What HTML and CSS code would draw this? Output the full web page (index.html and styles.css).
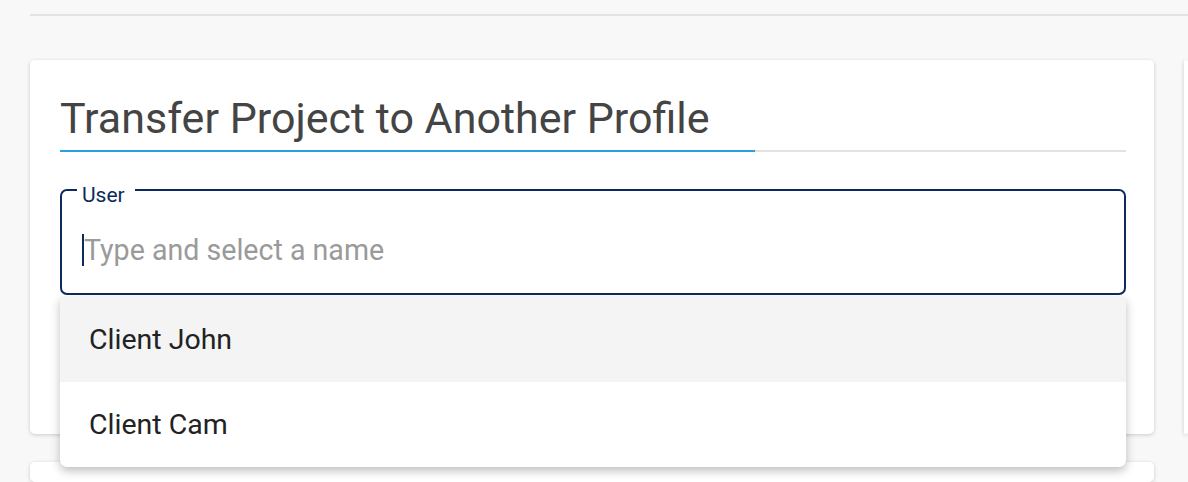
FILE: index.html
```html
<!DOCTYPE html>
<html lang="en">
<head>
    <meta charset="UTF-8">
    <meta name="viewport" content="width=device-width, initial-scale=1.0">
    <title>Transfer Project</title>
    <link rel="stylesheet" href="styles.css">
</head>
<body>
    <div class="topbar"></div>

    <div class="layout">
        <div class="column">
            <!-- Transfer card -->
            <section class="card transfer-card">
                <h2 class="card-title">Transfer Project to Another Profile</h2>
                <div class="tabline"><span class="tabline-active"></span></div>

                <div class="field">
                    <div class="field-box">
                        <label class="field-label" for="userInput">User</label>
                        <span class="caret"></span>
                        <input type="text" id="userInput" placeholder="Type and select a name">
                    </div>

                    <ul class="options">
                        <li class="option active">Client John</li>
                        <li class="option">Client Cam</li>
                    </ul>
                </div>
            </section>

            <section class="card next-card"></section>
        </div>

        <aside class="card side-card"></aside>
    </div>
</body>
</html>
```

FILE: styles.css
```css
/* General Styles */
body {
    font-family: 'Roboto', 'Liberation Sans', sans-serif;
    margin: 0;
    padding: 0;
    background: #f8f8f8;
    color: #212121;
    overflow: hidden;
}

.topbar {
    height: 14px;
    margin-left: 30px;
    border-bottom: 2px solid #e4e4e4;
}

/* Layout */
.layout {
    display: flex;
    gap: 30px;
    padding: 44px 0 0 30px;
}

.column {
    width: 1124px;
    flex-shrink: 0;
    display: flex;
    flex-direction: column;
    gap: 28px;
}

/* Card Styles */
.card {
    background: #fff;
    border-radius: 5px;
    box-shadow: 0 1px 4px rgba(0, 0, 0, 0.18);
}

.transfer-card {
    height: 374px;
    padding: 28px 28px 0 30px;
    box-sizing: border-box;
}

.next-card {
    height: 20px;
}

.side-card {
    width: 200px;
    height: 374px;
}

.card-title {
    margin: 0;
    font-size: 43px;
    font-weight: 400;
    color: #444;
    line-height: 60px;
}

.tabline {
    height: 2px;
    background: #e2e2e2;
    margin-top: 2px;
}

.tabline-active {
    display: block;
    width: 695px;
    height: 2px;
    background: #27a0df;
}

/* Field Styles */
.field {
    position: relative;
    margin-top: 37px;
}

.field-box {
    position: relative;
    height: 106px;
    box-sizing: border-box;
    padding: 16px 20px 0;
    border: 2px solid #0c2a5c;
    border-radius: 7px;
    display: flex;
    align-items: center;
}

.field-label {
    position: absolute;
    top: -6px;
    left: 15px;
    padding: 0 10px 0 5px;
    background: #fff;
    font-size: 21px;
    line-height: 20px;
    color: #0c2a5c;
}

.caret {
    width: 2px;
    height: 32px;
    flex-shrink: 0;
    background: #0c2a5c;
}

.field-box input {
    border: none;
    outline: none;
    flex: 1;
    font-family: inherit;
    font-size: 28.6px;
    color: #212121;
    padding: 0;
    background: transparent;
}

.field-box input::placeholder {
    color: #9a9a9a;
}

/* Dropdown Styles */
.options {
    position: absolute;
    top: 108px;
    left: 0;
    right: 0;
    margin: 0;
    padding: 0;
    list-style: none;
    background: #fff;
    border-radius: 0 0 7px 7px;
    box-shadow: 0 4px 10px rgba(0, 0, 0, 0.25);
    overflow: hidden;
}

.option {
    height: 85px;
    line-height: 86px;
    padding-left: 29px;
    font-size: 28.5px;
    color: #222;
}

.option.active {
    background: #f4f4f4;
}
```
